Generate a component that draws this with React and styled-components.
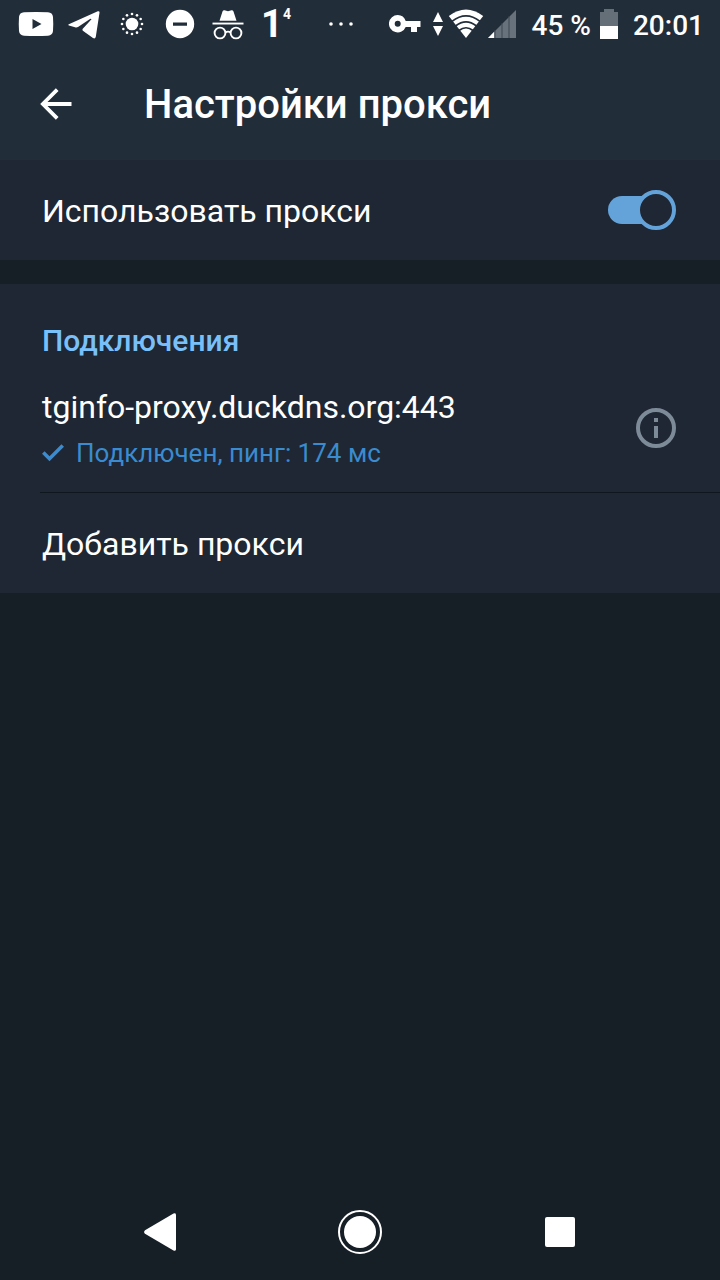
import React, { useState } from 'react';
import styled, { createGlobalStyle } from 'styled-components';

const sunRays = Array.from({ length: 12 }, (_, i) => {
    const angle = (i * Math.PI) / 6;
    return { x: 16 + 10 * Math.cos(angle), y: 16 + 10 * Math.sin(angle) };
});

const StatusBar = () => (
    <Status>
        <Slot>
            <svg width="36" height="32" viewBox="0 0 36 32" fill="#fff">
                <path fillRule="evenodd" d="M6 4.300Q18 3.500 30 4.300Q34.500 4.600 35 9Q35.500 16 35 23Q34.500 27.400 30 27.700Q18 28.500 6 27.700Q1.500 27.400 1 23Q.5 16 1 9Q1.500 4.600 6 4.300ZM14.500 11V21L23.500 16Z" />
            </svg>
        </Slot>
        <Slot>
            <svg width="32" height="32" viewBox="0 0 32 32" fill="#fff">
                <path d="M.8 16.200L29.800 3.300Q31.700 2.700 31.500 4.700L27.800 28.800Q27.200 31.200 25 30L15.200 23Q13.800 21.800 15 20.500L23.500 11.300Q23.200 10.300 22 11L10 19Q8.500 19.800 7 19.200L1 17.600Q-.2 17 .8 16.200Z" />
            </svg>
        </Slot>
        <Slot>
            <svg width="32" height="32" viewBox="0 0 32 32" fill="#fff">
                <circle cx="16" cy="16" r="6.300" />
                {sunRays.map((ray, i) => (
                    <circle key={i} cx={ray.x} cy={ray.y} r="1.300" />
                ))}
            </svg>
        </Slot>
        <Slot>
            <svg width="32" height="32" viewBox="0 0 32 32" fill="#fff">
                <path fillRule="evenodd" d="M16 1.800A14.200 14.200 0 1 0 16 30.200A14.200 14.200 0 1 0 16 1.800ZM9 14.500H23V17.800H9Z" />
            </svg>
        </Slot>
        <Slot>
            <svg width="32" height="32" viewBox="0 0 32 32">
                <path d="M7.500 12.800L10.500 3.500Q11 2 12.500 2.200L16 3.200L19.500 2.200Q21 2 21.500 3.500L24.500 12.800Z" fill="#fff" />
                <path d="M.5 14.600H31.500V16.500H.5Z" fill="#fff" />
                <g fill="none" stroke="#fff" strokeWidth="1.900">
                    <circle cx="8" cy="25" r="5.400" />
                    <circle cx="24" cy="25" r="5.400" />
                    <path d="M13.300 24.500Q16 22.700 18.700 24.500" />
                </g>
            </svg>
        </Slot>
        <Slot>
            <Counter>1<sup>4</sup></Counter>
        </Slot>
        <More>
            <svg width="24" height="8" viewBox="0 0 24 8" fill="#fff">
                <circle cx="2" cy="4" r="1.800" />
                <circle cx="12" cy="4" r="1.800" />
                <circle cx="22" cy="4" r="1.800" />
            </svg>
        </More>
        <System>
            <svg width="32" height="20" viewBox="0 0 32 20" fill="#fff">
                <path fillRule="evenodd" d="M8.700 1A8.700 8.700 0 1 0 16.700 13H22V18H28V13H31.500V7H16.700A8.700 8.700 0 0 0 8.700 1ZM8.700 6.700A3 3 0 1 1 8.700 12.700A3 3 0 1 1 8.700 6.700Z" />
            </svg>
            <svg width="12" height="24" viewBox="0 0 12 24" fill="#fff">
                <path d="M6 0L11 10H1ZM1 14H11L6 24Z" />
            </svg>
            <svg width="36" height="30" viewBox="0 0 36 30">
                <path d="M.8 7Q18-6 35.200 7L18 29Z" fill="#fff" />
                <g fill="none" stroke="#222d3a" strokeWidth="1.700">
                    <path d="M4 12.300Q18 1.500 32 12.300" />
                    <path d="M7.500 17Q18 8.800 28.500 17" />
                    <path d="M11 21.500Q18 16 25 21.500" />
                </g>
            </svg>
            <svg width="28" height="28" viewBox="0 0 28 28">
                <path d="M28 0V28H0Z" fill="#68727c" />
                <path d="M6.200 21.800V28H0Z" fill="#fff" />
                <path d="M7 20V28M14 13V28M21 6V28" stroke="#3d4753" strokeWidth="1" />
            </svg>
            <Percent>45 %</Percent>
            <svg width="20" height="30" viewBox="0 0 20 30">
                <path d="M5 0H15V3H19V17H1V3H5Z" fill="#646f78" />
                <path d="M1 17H19V30H1Z" fill="#fff" />
            </svg>
            <Clock>20:01</Clock>
        </System>
    </Status>
);

const App = () => {
    const [enabled, setEnabled] = useState(true);

    return (
        <Page>
            <GlobalStyle />
            <StatusBar />
            <Header>
                <BackButton type="button" aria-label="Назад">
                    <svg width="32" height="32" viewBox="0 0 32 32" fill="none" stroke="#fff" strokeWidth="3.800">
                        <path d="M31.500 16H3M17.200 1.700L2.900 16L17.200 30.300" />
                    </svg>
                </BackButton>
                <h1>Настройки прокси</h1>
            </Header>
            <main>
                <Section>
                    <Row as="label">
                        <span>Использовать прокси</span>
                        <Toggle
                            type="checkbox"
                            checked={enabled}
                            onChange={(e) => setEnabled(e.target.checked)}
                        />
                    </Row>
                </Section>
                <Gap />
                <Section>
                    <SectionTitle>Подключения</SectionTitle>
                    <Proxy>
                        <div className="info">
                            <div className="address">tginfo-proxy.duckdns.org:443</div>
                            <div className="state">
                                <svg width="22" height="18" viewBox="0 0 22 18" fill="none" stroke="#3a8bd0" strokeWidth="3.600">
                                    <path d="M1.300 8.500L7.500 14.700L20.700 1.500" />
                                </svg>
                                Подключен, пинг: 174 мс
                            </div>
                        </div>
                        <InfoButton type="button" aria-label="Информация">
                            <svg width="40" height="40" viewBox="0 0 40 40">
                                <circle cx="20" cy="20" r="18" fill="none" stroke="#7d8a97" strokeWidth="4" />
                                <path d="M18 10H22V14H18ZM18 18H22V30H18Z" fill="#7d8a97" />
                            </svg>
                        </InfoButton>
                    </Proxy>
                    <Row as="button" type="button">
                        <span>Добавить прокси</span>
                    </Row>
                </Section>
            </main>
            <NavBar>
                <button type="button" aria-label="Назад">
                    <svg width="32" height="38" viewBox="0 0 32 38" fill="#fff">
                        <path d="M32 1.500V36.500Q31.500 38.500 29.500 37.500L1 20.800Q-.8 19 1 17.200L29.500.5Q31.500-.5 32 1.500Z" />
                    </svg>
                </button>
                <button type="button" aria-label="Домой">
                    <svg width="44" height="44" viewBox="0 0 44 44">
                        <circle cx="22" cy="22" r="21" fill="none" stroke="#fff" strokeWidth="2" />
                        <circle cx="22" cy="22" r="16" fill="#fff" />
                    </svg>
                </button>
                <button type="button" aria-label="Обзор">
                    <svg width="30" height="30" viewBox="0 0 30 30" fill="#fff">
                        <rect width="30" height="30" rx="2" />
                    </svg>
                </button>
            </NavBar>
        </Page>
    );
};

const GlobalStyle = createGlobalStyle`
  *,
  *::before,
  *::after {
    box-sizing: border-box;
  }

  body {
    margin: 0;
    background: #161e26;
    color: #fff;
    font-family: Roboto, "Noto Sans", sans-serif;
  }

  button {
    padding: 0;
    border: 0;
    background: none;
    color: inherit;
    font: inherit;
    cursor: pointer;
  }

  svg {
    display: block;
    flex-shrink: 0;
  }
`

const Page = styled.div`
  min-height: 100vh;
  display: flex;
  flex-direction: column;

  main {
    flex: 1;
  }
`

const Status = styled.div`
  height: 48px;
  padding: 0 16px 0 12px;
  display: flex;
  align-items: center;
  background: #222d3a;
`

const Slot = styled.div`
  width: 48px;
  display: flex;
  justify-content: center;
  flex-shrink: 0;
`

const Counter = styled.span`
  display: flex;
  align-items: flex-start;
  font-weight: 700;
  font-size: 38px;
  line-height: 34px;

  sup {
    font-size: 14px;
    line-height: 14px;
  }
`

const More = styled.div`
  margin-left: 29px;
`

const System = styled.div`
  margin-left: auto;
  display: flex;
  align-items: center;
  gap: 4px;
  font-weight: 500;
  font-size: 28px;
  line-height: 32px;
  white-space: nowrap;

  svg:first-child {
    margin-right: 7px;
  }
`

const Percent = styled.span`
  margin-left: 12px;
  margin-right: 4px;
  padding-top: 3px;
`

const Clock = styled.time`
  margin-left: 10px;
  padding-top: 3px;
`

const Header = styled.header`
  height: 112px;
  padding-left: 40px;
  display: flex;
  align-items: center;
  background: #222d3a;

  h1 {
    margin: 0;
    padding-top: 2px;
    font-weight: 500;
    font-size: 40px;
    line-height: 48px;
  }
`

const BackButton = styled.button`
  margin-right: 72px;
`

const Section = styled.section`
  background: #1e2733;
`

const Gap = styled.div`
  height: 24px;
`

const Row = styled.div`
  width: 100%;
  height: 100px;
  padding: 0 44px 0 42px;
  display: flex;
  align-items: center;
  justify-content: space-between;
  font-size: 32px;
  line-height: 40px;
  cursor: pointer;

  span {
    padding-top: 2px;
  }
`

const Toggle = styled.input`
  appearance: none;
  width: 68px;
  height: 40px;
  margin: 0;
  display: flex;
  align-items: center;
  cursor: pointer;

  &::before {
    content: '';
    width: 56px;
    height: 28px;
    flex-shrink: 0;
    border-radius: 14px;
    background: ${({ checked }) => (checked ? '#64a3d9' : '#7d8a97')};
  }

  &::after {
    content: '';
    width: 40px;
    height: 40px;
    flex-shrink: 0;
    margin-left: ${({ checked }) => (checked ? '-28px' : '-56px')};
    border: 4px solid ${({ checked }) => (checked ? '#64a3d9' : '#7d8a97')};
    border-radius: 50%;
    background: #1e2733;
  }
`

const SectionTitle = styled.h2`
  margin: 0;
  padding: 39px 42px 19px;
  font-weight: 500;
  font-size: 30px;
  line-height: 36px;
  color: #79c0fa;
`

const Proxy = styled.div`
  margin-left: 40px;
  padding: 7px 44px 21px 2px;
  display: flex;
  align-items: center;
  justify-content: space-between;
  border-bottom: 1px solid #10161d;

  .address {
    font-size: 32px;
    line-height: 44px;
  }

  .state {
    margin-top: 6px;
    display: flex;
    align-items: center;
    gap: 12px;
    font-size: 26px;
    line-height: 36px;
    color: #3a8bd0;
  }
`

const InfoButton = styled.button`
  border-radius: 50%;
`

const NavBar = styled.nav`
  height: 96px;
  padding: 0 60px;
  display: flex;
  align-items: center;

  button {
    flex: 1;
    display: flex;
    justify-content: center;
  }
`

export default App;
